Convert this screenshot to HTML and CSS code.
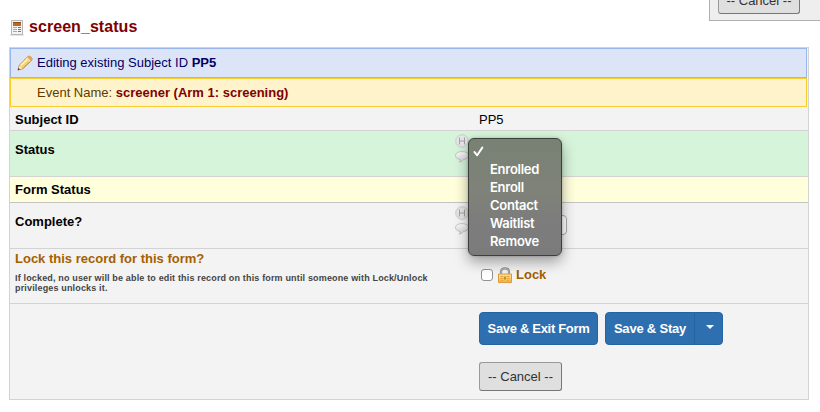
FILE: index.html
```html
<!DOCTYPE html>
<html lang="en">
<head>
<meta charset="utf-8">
<title>screen_status</title>
<link rel="stylesheet" href="styles.css">
</head>
<body>
<svg class="defs" width="0" height="0">
  <defs>
    <linearGradient id="silver" x1="0" y1="0" x2="0" y2="1"><stop offset="0" stop-color="#fcfcfc"/><stop offset="1" stop-color="#d4d4d8"/></linearGradient>
    <linearGradient id="gold" x1="0" y1="0" x2="0" y2="1"><stop offset="0" stop-color="#ffe8a0"/><stop offset="1" stop-color="#f5b040"/></linearGradient>
    <symbol id="history" viewBox="0 0 14 14"><circle cx="7" cy="7" r="6.3" fill="#e6e6e6" stroke="#c4c4c4" stroke-width=".8"/><path d="M4.500 3.500v7M9.500 3.500v7M4.500 7h5" fill="none" stroke="#a3a3a3" stroke-width="1"/></symbol>
    <symbol id="balloon" viewBox="0 0 14 12"><path d="M7 .6C3.200.6.5 2.300.5 4.600c0 2 2 3.600 4.900 4-.1 1-.5 1.800-1.100 2.500 1.800-.3 3.300-1.200 4-2.500 3-.4 5.200-2 5.200-4C13.500 2.300 10.800.6 7 .6z" fill="url(#silver)" stroke="#b8b8b8" stroke-width=".8"/></symbol>
  </defs>
</svg>
<div class="float-panel"><button class="cancel">-- Cancel --</button></div>
<h1 class="title">
  <svg width="14" height="16" viewBox="0 0 14 16"><path d="M0 14.500h14v1H0z" fill="#ccc"/><path d="M1.500.5h11v14h-11z" fill="#f4f4f4" stroke="#b5b5b5"/><path d="M3 2h8v4H3z" fill="#b96a20"/><path d="M3 2h8v1H3z" fill="#8d4b16"/><path d="M3 7.500h4M3 9.500h4M3 11.500h4" stroke="#aaa"/><path d="M8 7.500h3M8 9.500h3M8 11.500h3" stroke="#777"/></svg>
  <span>screen_status</span>
</h1>
<main class="form">
  <div class="banner blue">
    <svg class="pencil" width="16" height="16" viewBox="0 0 16 16"><path d="M1 15l1.300-4.800L11 1.600c1.600-1.300 5 1.600 3.700 3.600L5.800 13.700z" fill="#f8cf62" stroke="#a8742c" stroke-width=".9"/><path d="M3.800 10.500L11.500 3" stroke="#fff2b0" stroke-width="1.800"/><path d="M10 2.600l3.500 3.700 1.200-1.200c1.200-2-2-4.700-3.700-3.500z" fill="#eca45c"/><path d="M9.700 2.800l3.600 3.600" stroke="#f6e7d0" stroke-width="1.200"/><path d="M2.500 10.300l3.100 3.300L1 15z" fill="#f7dfc3"/><path d="M1.500 13L3 14.500.8 15.200z" fill="#333"/></svg>
    <span>Editing existing Subject ID <b>PP5</b></span>
  </div>
  <div class="banner yellow"><span>Event Name: <b>screener (Arm 1: screening)</b></span></div>
  <div class="row subject"><div class="label">Subject ID</div><div class="value">PP5</div></div>
  <div class="row status">
    <div class="label">Status</div>
    <div class="value">
      <div class="tools"><svg width="14" height="14"><use href="#history"/></svg><svg width="14" height="12"><use href="#balloon"/></svg></div>
      <ul class="menu">
        <li><svg width="11" height="11" viewBox="0 0 11 11"><path d="M1.500 6.100l2.700 3.200L9.300 1.600" fill="none" stroke="#fff" stroke-width="2" stroke-linecap="round" stroke-linejoin="round"/></svg></li>
        <li>Enrolled</li><li>Enroll</li><li>Contact</li><li>Waitlist</li><li>Remove</li>
      </ul>
    </div>
  </div>
  <div class="row section"><div class="label">Form Status</div></div>
  <div class="row complete">
    <div class="label">Complete?</div>
    <div class="value">
      <div class="tools"><svg width="14" height="14"><use href="#history"/></svg><svg width="14" height="12"><use href="#balloon"/></svg></div>
      <div class="select"></div>
    </div>
  </div>
  <div class="row lock">
    <div class="label"><div class="lock-title">Lock this record for this form?</div><div class="note">If locked, no user will be able to edit this record on this form until someone with Lock/Unlock<br>privileges unlocks it.</div></div>
    <div class="value">
      <span class="check"></span>
      <svg width="14" height="16" viewBox="0 0 14 16"><path d="M3 8V4.800C3 2.500 4.700 1.300 7 1.300s4 1.200 4 3.500V8" fill="none" stroke="#8b8b8b" stroke-width="2.200"/><path d="M3 8V4.800C3 2.500 4.700 1.300 7 1.300s4 1.200 4 3.500V8" fill="none" stroke="#c4c4c4" stroke-width=".8"/><path d="M.5 7h13v8.500H.5z" fill="url(#gold)" stroke="#dc9a3a"/><path d="M2.500 9.500h3m3 0h3m-9 2h3m3 0h3m-9 2h3m3 0h3" stroke="#eaa63c"/><path d="M6.300 9.500h1.400v3H6.300z" fill="#a87322"/></svg>
      <b>Lock</b>
    </div>
  </div>
  <div class="row actions">
    <div class="label"></div>
    <div class="value">
      <div class="buttons"><button class="primary exit">Save &amp; Exit Form</button><div class="group"><button class="primary stay">Save &amp; Stay</button><button class="primary drop" aria-label="More"><svg width="8" height="4" viewBox="0 0 8 4"><path d="M0 0h8L4 4z" fill="#fff"/></svg></button></div></div>
      <button class="cancel">-- Cancel --</button>
    </div>
  </div>
</main>
</body>
</html>
```
FILE: styles.css
```css
* { box-sizing: border-box; }
body { margin: 0; height: 412px; overflow: hidden; background: #fff; font: 13px/16px "Liberation Sans", Arial, sans-serif; color: #000; }
svg { display: block; flex: none; }
.defs { position: absolute; }
button { font: inherit; padding: 0; margin: 0; }
.float-panel { position: absolute; top: -20px; right: -1px; width: 112px; height: 41px; padding: 4px 0 0 8px; border: 1px solid #b0b0b0; background: #eee; }
.float-panel .cancel { width: 82px; padding-top: 2px; }
.title { display: flex; align-items: center; height: 47px; margin: 0; padding: 9px 0 0 10px; gap: 5px; font-size: 16px; line-height: 20px; color: #800000; letter-spacing: .06px; }
.title span { margin-top: -3px; }
.form { width: 800px; height: 353px; margin-left: 9px; border: 1px solid #d3d3d3; background: #f3f3f3; }
.banner { display: flex; align-items: center; width: 797px; border: 1px solid; }
.blue { height: 30px; padding-left: 6px; gap: 4px; background: #dce5f7; border-color: #98b6ea; color: #000066; }
.yellow { height: 29px; padding-left: 26px; background: #fff3cc; border-color: #f9cc2f; color: #5d3c00; }
.yellow b { color: #800000; }
.row { display: flex; border-bottom: 1px solid #d3d3d3; }
.label { width: 440px; padding-left: 5px; font-weight: bold; }
.value { position: relative; padding-left: 29px; }
.subject { height: 24px; padding-top: 5px; }
.status { height: 46px; background: #d6f4da; }
.status .label, .complete .label { padding-top: 11px; }
.section { height: 26px; padding-top: 5px; background: #ffffdc; border-color: #c3c3c3; }
.complete { height: 46px; }
.tools { width: 14px; margin-left: -24px; padding-top: 3px; }
.tools svg + svg { margin-top: 3px; }
.complete .value { display: flex; }
.select { width: 98px; height: 20px; margin: 12px 0 0 0; border: 1px solid #aaa; border-radius: 4px; background: #fff; }
.menu { position: absolute; z-index: 2; left: 18px; top: 7px; width: 94px; height: 118px; margin: 0; padding: 3px 0 0 21px; list-style: none; border: 1px solid #3c3f3c; border-radius: 6px; background: linear-gradient(#788174, #7f8278 45%, #7c7d7c 70%, #7b7b7b); box-shadow: 0 6px 14px rgba(0,0,0,.35), 0 0 3px rgba(0,0,0,.2); color: #fff; font: 600 13px/18px Inter, sans-serif; }
.menu li { height: 18px; letter-spacing: -.27px; }
.menu svg { margin-left: -17px; transform: translateY(4px); }
.lock { height: 55px; }
.lock-title { padding-top: 2px; color: #a56000; }
.note { margin-top: 6px; font-size: 9px; line-height: 10px; color: #444; letter-spacing: .16px; }
.lock .value { display: flex; align-items: center; gap: 5px; padding: 0 0 3px 31px; color: #a05f00; }
.lock b { margin-left: -1px; }
.check { width: 12px; height: 12px; border: 1px solid #929292; border-radius: 3px; background: #fff; }
.actions { height: 95px; border: 0; }
.actions .value { padding-top: 8px; }
.buttons { display: flex; gap: 7px; margin-bottom: 17px; }
.group { display: flex; }
.primary { height: 33px; border: 1px solid #2464a0; border-radius: 4px; background: #2e6fb0; color: #fff; font-weight: bold; letter-spacing: -.32px; }
.exit { width: 119px; }
.stay { width: 90px; border-radius: 4px 0 0 4px; letter-spacing: -.2px; }
.drop { display: flex; align-items: center; justify-content: center; width: 29px; margin-left: -1px; padding: 0 0 3px 2px; border-radius: 0 4px 4px 0; }
.cancel { display: block; width: 83px; height: 29px; border: 1px solid #888; border-color: #999 #777 #777 #999; border-radius: 3px; background: #dfdfdf; color: #333; }
```
